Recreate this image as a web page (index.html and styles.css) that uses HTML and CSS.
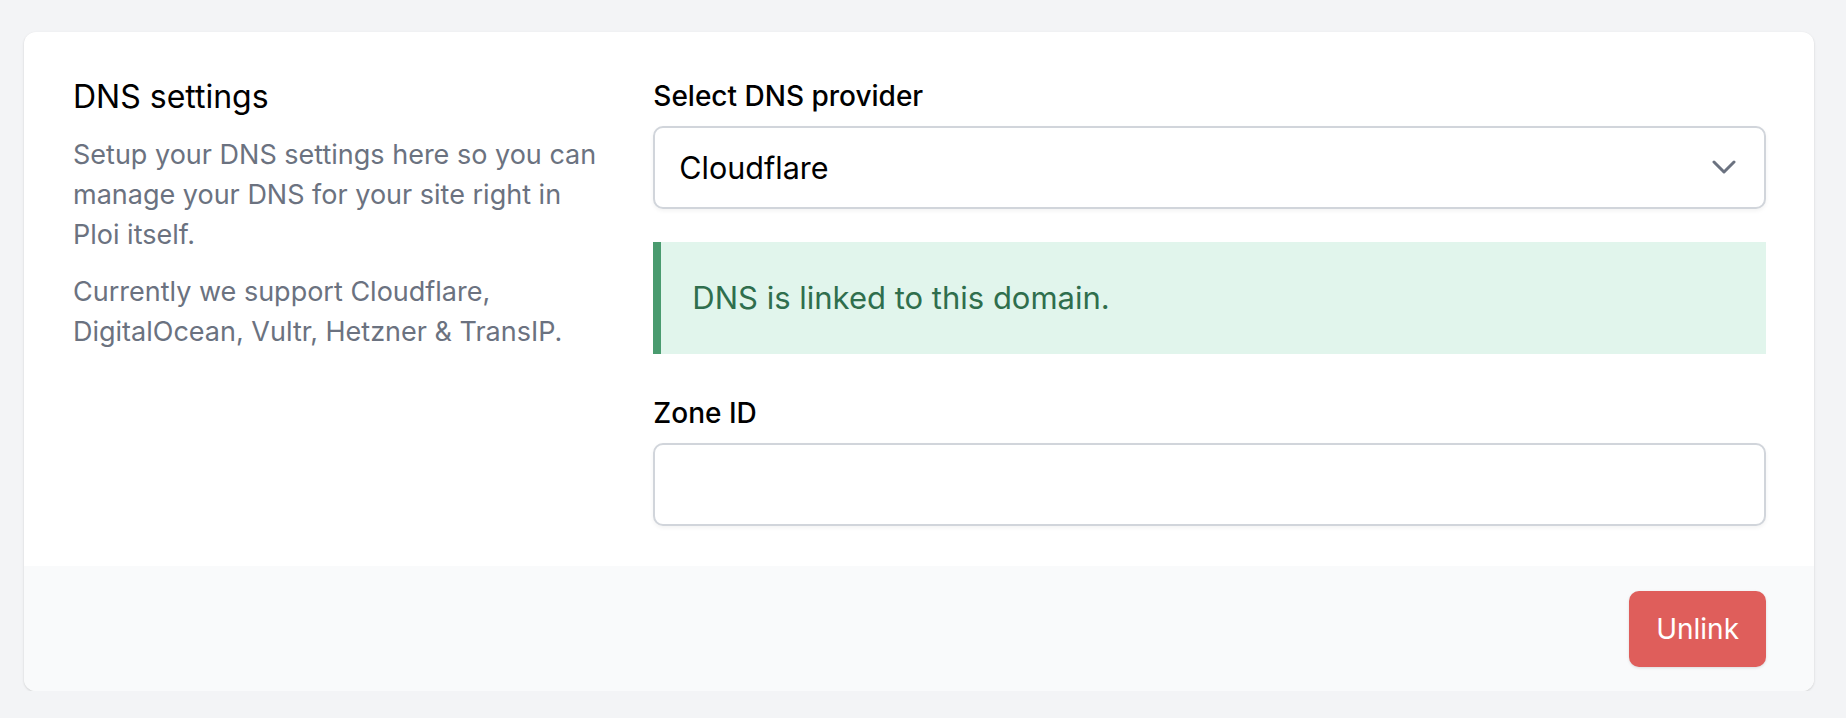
FILE: index.html
```html
<!DOCTYPE html>
<html lang="en">
<head>
    <meta charset="UTF-8">
    <meta name="viewport" content="width=device-width, initial-scale=1.0">
    <title>DNS settings</title>
    <link rel="stylesheet" href="styles.css">
</head>
<body>

<!-- DNS settings card -->
<div class="card">
    <div class="card-body">
        <!-- Description -->
        <div class="intro">
            <h3>DNS settings</h3>
            <p>Setup your DNS settings here so you can manage your DNS for your site right in Ploi itself.</p>
            <p>Currently we support Cloudflare, DigitalOcean, Vultr, Hetzner &amp; TransIP.</p>
        </div>

        <!-- Form -->
        <div class="form">
            <label for="provider">Select DNS provider</label>
            <div class="select-wrap">
                <select id="provider">
                    <option>Cloudflare</option>
                    <option>DigitalOcean</option>
                    <option>Vultr</option>
                    <option>Hetzner</option>
                    <option>TransIP</option>
                </select>
                <svg class="chevron" viewBox="0 0 24 14" fill="none" stroke="#6b7280" stroke-width="3" stroke-linecap="round" stroke-linejoin="round">
                    <path d="M2 2l10 10 10-10"/>
                </svg>
            </div>

            <div class="alert">DNS is linked to this domain.</div>

            <label for="zone">Zone ID</label>
            <input type="text" id="zone">
        </div>
    </div>

    <!-- Footer -->
    <div class="card-footer">
        <button class="btn-danger">Unlink</button>
    </div>
</div>

</body>
</html>
```

FILE: styles.css
```css
body {
    margin: 0;
    padding: 32px 32px 0 24px;
    background-color: #f3f4f6;
    font-family: Inter, "Noto Sans", sans-serif;
    color: #111827;
}
.card {
    background-color: #ffffff;
    border-radius: 12px;
    box-shadow: 0 1px 3px rgba(0, 0, 0, 0.1), 0 1px 2px rgba(0, 0, 0, 0.06);
    overflow: hidden;
}
.card-body {
    display: grid;
    grid-template-columns: repeat(3, 1fr);
    column-gap: 48px;
    padding: 44px 48px 40px 49px;
}
.intro h3 {
    margin: 4px 0 0;
    font-size: 32px;
    font-weight: 400;
    line-height: 34px;
    color: #000000;
}
.intro p {
    margin: 21px 0 0;
    font-size: 27px;
    line-height: 40px;
    color: #6b7280;
}
.intro p + p {
    margin-top: 17px;
}
.form {
    grid-column: span 2;
    display: flex;
    flex-direction: column;
}
.form label {
    font-size: 28px;
    font-weight: 500;
    line-height: 40px;
    color: #000000;
}
.select-wrap {
    position: relative;
    margin-top: 10px;
}
.select-wrap select, .form input {
    display: block;
    width: 100%;
    box-sizing: border-box;
    height: 83px;
    padding: 0 24px;
    font-family: Inter, "Noto Sans", sans-serif;
    font-size: 30.5px;
    color: #000000;
    background-color: #ffffff;
    border: 2px solid #d1d5db;
    border-radius: 10px;
    box-shadow: 0 2px 4px rgba(0, 0, 0, 0.05);
    appearance: none;
    -webkit-appearance: none;
    outline: none;
}
.chevron {
    position: absolute;
    right: 30px;
    top: 34px;
    width: 24px;
    height: 14px;
}
.alert {
    margin-top: 33px;
    margin-bottom: 39px;
    padding: 34px 32px 34px 31px;
    font-size: 31px;
    line-height: 44px;
    color: #2f6e4d;
    background-color: #e1f5ec;
    border-left: 8px solid #4a9b6f;
}
.form input {
    margin-top: 10px;
}
.card-footer {
    display: flex;
    justify-content: flex-end;
    padding: 25px 48px 24px;
    background-color: #f9fafb;
}
.btn-danger {
    height: 76px;
    padding: 0 27px;
    font-family: Inter, "Noto Sans", sans-serif;
    font-size: 28px;
    color: #ffffff;
    background-color: #df5e5b;
    border: none;
    border-radius: 10px;
    box-shadow: 0 1px 3px rgba(0, 0, 0, 0.12);
    cursor: pointer;
}
```
